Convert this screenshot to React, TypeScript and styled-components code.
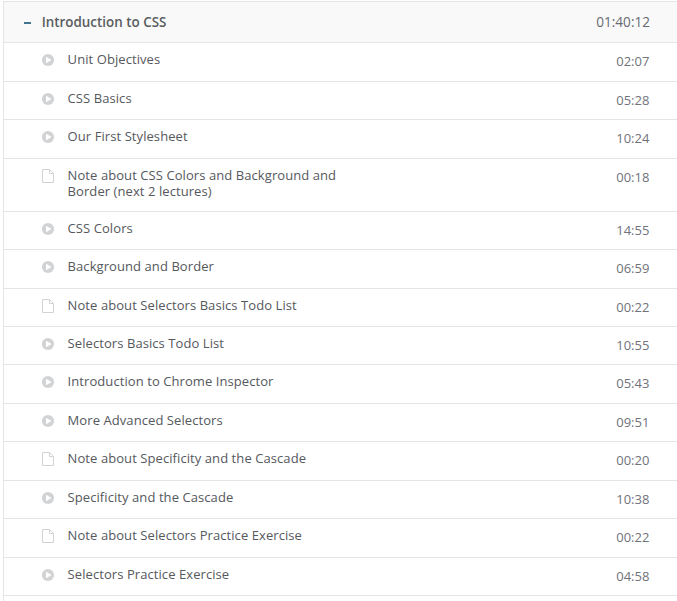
import React from "react";
import styled, { createGlobalStyle } from "styled-components";

const GlobalStyle = createGlobalStyle`
  * { box-sizing: border-box; }
  body { margin: 0; background: #fff; overflow: hidden; font-family: "Open Sans", sans-serif; }
`;

const Panel = styled.section`
  margin: 1px 0 0 3px;
  height: 600px;
  overflow: hidden;
  border-left: 1px solid #e5e5e5;
  border-top: 1px solid #e5e5e5;
`;

const Header = styled.header`
  display: flex;
  height: 41px;
  padding: 0 27px 0 20px;
  background: #f9f9f9;
  border-bottom: 1px solid #e5e5e5;
  line-height: 40px;
`;

const Toggle = styled.span`
  width: 7px;
  height: 2px;
  margin: 20px 10.7px 0 0;
  background: #3f7590;
`;

const SectionTitle = styled.h2`
  flex: 1;
  margin: 0;
  color: #5a5d61;
  font-size: 13.4px;
  font-weight: 600;
`;

const Total = styled.span`
  color: #686b72;
  font-size: 13.6px;
`;

const Row = styled.div<{ $height: number }>`
  display: flex;
  height: ${(p) => p.$height}px;
  padding: 9px 27.6px 0 37px;
  border-bottom: 1px solid #e5e5e5;
  font-size: 13px;
  line-height: 16px;
`;

const IconSlot = styled.span`
  flex: 0 0 14px;
  height: 16px;
  margin-right: 12.6px;
  svg { display: block; }
`;

const Name = styled.span`
  width: 290px;
  margin-top: -1px;
  color: #55585d;
  letter-spacing: 0.075px;
`;

const Duration = styled.span`
  margin: 1px 0 0 auto;
  color: #70737b;
`;

const PlayIcon = () => (
  <svg width="14" height="16" viewBox="0 0 14 16">
    <circle cx="7" cy="8" r="6.1" fill="#d2d3d5" />
    <path d="M5 4.7L10.6 8L5 11.3Z" fill="#fff" />
  </svg>
);

const FileIcon = () => (
  <svg width="14" height="16" viewBox="0 0 14 16" fill="none" stroke="#d2d3d5">
    <path d="M1.5 1.5H8.5L12.5 5.5V14.5H1.5Z M8.5 1.5V5.5H12.5" />
  </svg>
);

type Lecture = [title: string, time: string, height: number, note?: boolean];

const lectures: Lecture[] = [
  ["Unit Objectives", "02:07", 39],
  ["CSS Basics", "05:28", 38],
  ["Our First Stylesheet", "10:24", 39],
  ["Note about CSS Colors and Background and Border (next 2 lectures)", "00:18", 53, true],
  ["CSS Colors", "14:55", 38],
  ["Background and Border", "06:59", 39],
  ["Note about Selectors Basics Todo List", "00:22", 38, true],
  ["Selectors Basics Todo List", "10:55", 38],
  ["Introduction to Chrome Inspector", "05:43", 39],
  ["More Advanced Selectors", "09:51", 38],
  ["Note about Specificity and the Cascade", "00:20", 39, true],
  ["Specificity and the Cascade", "10:38", 38],
  ["Note about Selectors Practice Exercise", "00:22", 39, true],
  ["Selectors Practice Exercise", "04:58", 38],
];

export default function App() {
  return (
    <>
      <GlobalStyle />
      <Panel>
        <Header>
          <Toggle />
          <SectionTitle>Introduction to CSS</SectionTitle>
          <Total>01:40:12</Total>
        </Header>
        {lectures.map(([title, time, height, note]) => (
          <Row key={title} $height={height}>
            <IconSlot>{note ? <FileIcon /> : <PlayIcon />}</IconSlot>
            <Name>{title}</Name>
            <Duration>{time}</Duration>
          </Row>
        ))}
      </Panel>
    </>
  );
}
